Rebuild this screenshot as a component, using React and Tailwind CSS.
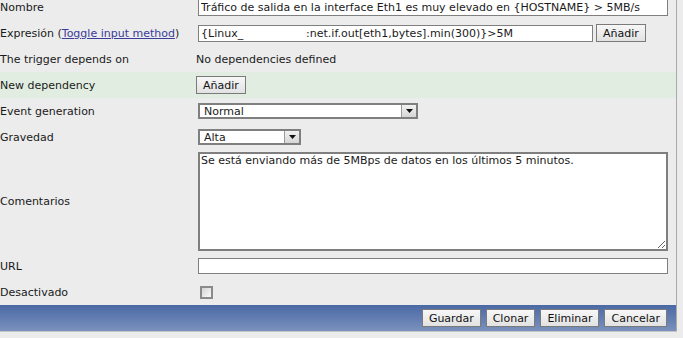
import React from "react";

const font = { fontFamily: '"DejaVu Sans", Verdana, sans-serif' };

const Row = ({ label, children, className = "h-[26px]" }) => (
  <div className={`flex items-center ${className}`}>
    <div className="w-[196px] shrink-0 pt-[2px]">{label}</div>
    <div className="flex flex-1 items-center">{children}</div>
  </div>
);

const Btn = ({ children }) => (
  <button className="h-[18px] border border-[#7a7a7a] bg-gradient-to-b from-[#f7f7f7] to-[#e2e2e2] px-[6px] text-[11px] leading-none text-[#111]">
    {children}
  </button>
);

const Select = ({ value, width }) => (
  <div className={`ml-[2px] flex h-[16px] items-center border-2 border-[#7f7f7f] bg-white ${width}`}>
    <span className="flex-1 pl-[4px] leading-none">{value}</span>
    <span className="flex h-full w-[15px] items-center justify-center border-l border-[#9a9a9a] bg-gradient-to-b from-[#f2f2f2] to-[#d6d6d6]">
      <svg width="7" height="4" viewBox="0 0 7 4">
        <path d="M0 0h7L3.5 4z" fill="#111" />
      </svg>
    </span>
  </div>
);

export default function App() {
  return (
    <div className="h-[338px] w-[683px] overflow-hidden bg-[#ececec] text-[11px] text-[#1a1a1a]" style={font}>
      <div className="w-[677px] border-r border-[#a9a9a9]">
        <div className="-mt-[6px]">
          <Row label="Nombre">
            <input
              readOnly
              value="Tráfico de salida en la interface Eth1 es muy elevado en {HOSTNAME} > 5MB/s"
              className="ml-[2px] h-[17px] w-[470px] border border-[#7f7f7f] bg-white px-[2px] text-[11px] outline-none"
            />
          </Row>
          <Row label={<span>Expresión (<a className="text-[#3b3b9a] underline">Toggle input method</a>)</span>}>
            <input
              readOnly
              value="{Linux_                  :net.if.out[eth1,bytes].min(300)}>5M"
              className="ml-[2px] h-[17px] w-[395px] border border-[#7f7f7f] bg-white px-[2px] text-[11px] outline-none"
              style={{ whiteSpace: "pre" }}
            />
            <span className="ml-[3px]"><Btn>Añadir</Btn></span>
          </Row>
          <Row label="The trigger depends on">
            <span className="pt-[2px]">No dependencies defined</span>
          </Row>
          <Row label="New dependency" className="h-[26px] bg-[#e0ede0]">
            <Btn>Añadir</Btn>
          </Row>
          <Row label="Event generation">
            <Select value="Normal" width="w-[220px]" />
          </Row>
          <Row label="Gravedad">
            <Select value="Alta" width="w-[103px]" />
          </Row>
          <Row label="Comentarios" className="h-[103px]">
            <textarea
              readOnly
              value="Se está enviando más de 5MBps de datos en los últimos 5 minutos."
              className="ml-[2px] h-[99px] w-[470px] border-2 border-[#7f7f7f] bg-white px-[1px] text-[11px] leading-[14px] outline-none"
            />
          </Row>
          <Row label="URL">
            <input readOnly className="ml-[2px] h-[16px] w-[470px] border border-[#7f7f7f] bg-white outline-none" />
          </Row>
          <Row label="Desactivado">
            <span className="ml-[4px] h-[13px] w-[13px] border-2 border-[#8a8a8a] bg-gradient-to-br from-[#d4d4d4] to-[#fafafa]" />
          </Row>
        </div>
        <div className="flex h-[26px] items-center justify-end gap-[5px] bg-gradient-to-b from-[#4a69a4] to-[#7b91bd] pr-[9px]">
          <Btn>Guardar</Btn>
          <Btn>Clonar</Btn>
          <Btn>Eliminar</Btn>
          <Btn>Cancelar</Btn>
        </div>
      </div>
      <div className="h-[1px] w-[677px] bg-[#c5c5c5]" />
    </div>
  );
}
